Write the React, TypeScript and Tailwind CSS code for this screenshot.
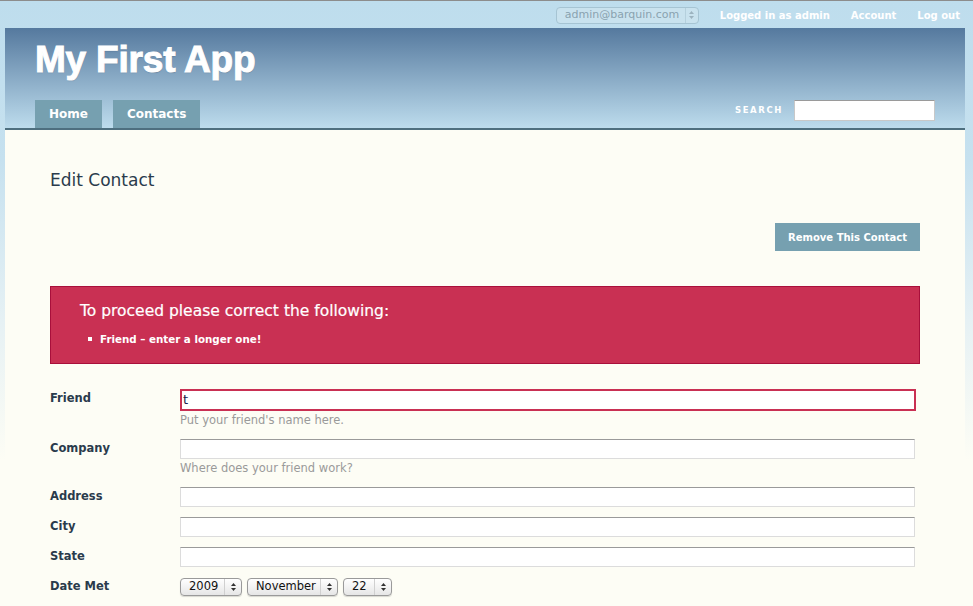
import React from 'react';

const sans = 'font-["DejaVu_Sans",Verdana,sans-serif]';

function Spinner({ className = '' }: { className?: string }) {
   return (
      <span className={`flex flex-col items-center justify-center gap-[2px] ${className}`}>
         <svg width="5" height="3" viewBox="0 0 5 3">
            <path d="M2.5 0 L5 3 L0 3 Z" fill="currentColor" />
         </svg>
         <svg width="5" height="3" viewBox="0 0 5 3">
            <path d="M0 0 L5 0 L2.5 3 Z" fill="currentColor" />
         </svg>
      </span>
   );
}

function FakeSelect({ value, width }: { value: string; width: string }) {
   return (
      <div
         className={`flex h-[18px] items-center rounded-[4px] border border-[#9a9a9a] bg-[linear-gradient(to_bottom,#ffffff,#e6e6e6)] text-[11.5px] leading-none text-[#111] shadow-[0_1px_1px_rgba(0,0,0,0.15)] ${width}`}
      >
         <span className="flex-1 pl-[8px]">{value}</span>
         <span className="flex h-full w-[17px] items-center justify-center border-l border-[#d0d0d0] text-[#333]">
            <Spinner />
         </span>
      </div>
   );
}

function TextInput({ value = '' }: { value?: string }) {
   return (
      <div className="mr-[5px] h-[20px] border border-[#dcdcdc] border-t-[#9a9a9a] bg-white px-[2px] text-[13px] leading-[18px] text-[#1b1b4a]">
         {value}
      </div>
   );
}

function Hint({ children }: { children: React.ReactNode }) {
   return <div className="h-[18px] text-[11.5px] leading-[18px] text-[#9a9a9a]">{children}</div>;
}

function Row({ label, children }: { label: string; children: React.ReactNode }) {
   return (
      <div className="flex">
         <div className="w-[130px] shrink-0 text-[11.5px] font-bold leading-[18px] text-[#2a3b4c]">{label}</div>
         <div className="flex-1">{children}</div>
      </div>
   );
}

export default function App() {
   return (
      <div
         className={`${sans} min-h-screen w-full border-t border-[#8c8c8c] bg-[linear-gradient(to_bottom,#bedded_0px,#c6e1ef_160px,#e6f1f4_320px,#fdfdf5_460px)]`}
      >
         {/* top bar */}
         <div className="flex h-[27px] items-center justify-end pt-[1px] pr-[13px]">
            <div className="flex h-[17px] w-[143px] items-center rounded-[4px] border border-[#a6c4d3] bg-[#c9e2ee] text-[11px] text-[#8aa3b0]">
               <span className="flex-1 pl-[8px]">admin@barquin.com</span>
               <span className="flex h-full w-[13px] items-center justify-center border-l border-[#b5d0dd] text-[#9cb3bf]">
                  <Spinner />
               </span>
            </div>
            <a className="ml-[21px] text-[10px] font-bold text-white">Logged in as admin</a>
            <a className="ml-[21px] text-[10px] font-bold text-white">Account</a>
            <a className="ml-[21px] text-[10px] font-bold text-white">Log out</a>
         </div>

         <div className="ml-[5px] mr-[8px]">
            {/* header */}
            <div className="flex h-[102px] flex-col justify-between border-b-2 border-[#4e6f7f] bg-[linear-gradient(to_bottom,#55799e,#bddced)] px-[30px]">
               <h1 className='pt-[13px] font-["Liberation_Sans",Arial,sans-serif] text-[37px] leading-none font-bold tracking-[-0.2px] text-white [-webkit-text-stroke:1px_white] [text-shadow:0_1px_1px_rgba(40,60,90,0.35)]'>
                  My First App
               </h1>
               <div className="flex items-end justify-between">
                  <nav className="flex gap-[11px]">
                     <a className="flex h-[28px] items-center bg-[#76a0b0] px-[14px] text-[12px] font-bold text-white">Home</a>
                     <a className="flex h-[28px] items-center bg-[#76a0b0] px-[14px] text-[12px] font-bold text-white">Contacts</a>
                  </nav>
                  <div className="mb-[7px] flex items-center">
                     <span className="mr-[11px] text-[8.5px] font-bold tracking-[1.6px] text-white">SEARCH</span>
                     <div className="h-[21px] w-[141px] border border-[#c8c8c8] border-t-[#9a9a9a] bg-white" />
                  </div>
               </div>
            </div>

            {/* content */}
            <div className="min-h-[480px] bg-[#fdfdf5] px-[45px] pt-[39px] pb-[20px]">
               <h2 className="text-[17px] leading-[22px] text-[#2a3b4c]">Edit Contact</h2>

               <div className="mt-[32px] flex justify-end">
                  <button className="h-[28px] bg-[#76a0b0] px-[13px] text-[10px] font-bold text-white">
                     Remove This Contact
                  </button>
               </div>

               <div className="mt-[35px] h-[78px] border border-[#a80f3b] bg-[#c93053] pt-[14px] pl-[29px] text-white">
                  <div className="text-[15.5px] leading-[20px] [-webkit-text-stroke:0.2px_white]">
                     To proceed please correct the following:
                  </div>
                  <ul className="mt-[10px]">
                     <li className="flex items-center text-[10.3px] leading-[16px] font-bold">
                        <span className="mr-[8px] ml-[8px] h-[4px] w-[4px] bg-white" />
                        Friend – enter a longer one!
                     </li>
                  </ul>
               </div>

               <form className="mt-[25px] flex flex-col">
                  <Row label="Friend">
                     <div className="mr-[4px] h-[22px] border-2 border-[#c93053] bg-white px-[1px] text-[13px] leading-[18px] text-[#1b1b4a]">
                        t
                     </div>
                     <Hint>Put your friend's name here.</Hint>
                  </Row>
                  <div className="mt-[10px]">
                     <Row label="Company">
                        <TextInput />
                        <Hint>Where does your friend work?</Hint>
                     </Row>
                  </div>
                  <div className="mt-[10px]">
                     <Row label="Address">
                        <TextInput />
                     </Row>
                  </div>
                  <div className="mt-[10px]">
                     <Row label="City">
                        <TextInput />
                     </Row>
                  </div>
                  <div className="mt-[10px]">
                     <Row label="State">
                        <TextInput />
                     </Row>
                  </div>
                  <div className="mt-[10px]">
                     <Row label="Date Met">
                        <div className="flex gap-[5px] pt-[1px]">
                           <FakeSelect value="2009" width="w-[62px]" />
                           <FakeSelect value="November" width="w-[91px]" />
                           <FakeSelect value="22" width="w-[49px]" />
                        </div>
                     </Row>
                  </div>
               </form>
            </div>
         </div>
      </div>
   );
}
